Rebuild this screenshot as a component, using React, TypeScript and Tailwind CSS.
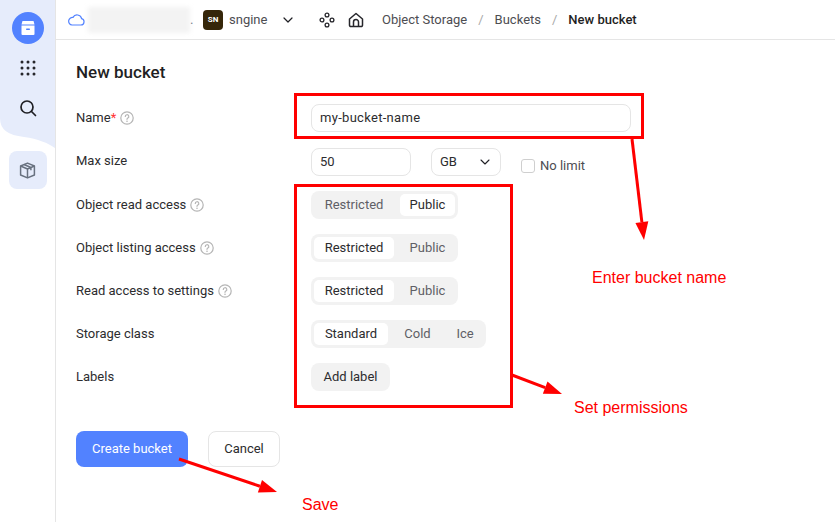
import { ChevronDown } from "lucide-react";
import type { ReactNode } from "react";

const Help = () => (
  <svg width="14" height="14" viewBox="0 0 14 14" fill="none" className="shrink-0">
    <circle cx="7" cy="7" r="6.2" stroke="#b5b5b5" strokeWidth="1.2" />
    <path d="M5.3 5.5a1.75 1.75 0 1 1 2.6 1.5c-.6.35-.9.7-.9 1.3" stroke="#b5b5b5" strokeWidth="1.2" strokeLinecap="round" />
    <circle cx="7" cy="10.2" r=".8" fill="#b5b5b5" />
  </svg>
);

const Row = ({ label, help, required, raised, children }: { label: string; help?: boolean; required?: boolean; raised?: boolean; children: ReactNode }) => (
  <div className="flex h-[43px] items-center">
    <div className={`flex w-[235px] items-center gap-[4px] text-[#2c2c2e] ${raised ? "mt-[-2px]" : ""}`}>
      <span>
        {label}
        {required && <span className="text-[#f33]">*</span>}
      </span>
      {help && <Help />}
    </div>
    {children}
  </div>
);

const Segments = ({ items, active }: { items: { name: string; w: string }[]; active: number }) => (
  <div className="flex h-[28px] items-center gap-[6px] rounded-lg bg-[#f2f2f2] px-[3px]">
    {items.map((item, i) => (
      <div
        key={item.name}
        className={`flex h-[22px] items-center justify-center rounded-[5px] ${item.w} ${
          i === active ? "bg-white text-[#2c2c2e]" : "text-[#5f5f66]"
        }`}
      >
        {item.name}
      </div>
    ))}
  </div>
);

const Arrow = ({ x1, y1, x2, y2 }: { x1: number; y1: number; x2: number; y2: number }) => {
  const a = Math.atan2(y2 - y1, x2 - x1);
  const len = 18;
  const hw = 6.5;
  const bx = x2 - Math.cos(a) * len;
  const by = y2 - Math.sin(a) * len;
  const px = -Math.sin(a) * hw;
  const py = Math.cos(a) * hw;
  return (
    <>
      <line x1={x1} y1={y1} x2={bx} y2={by} stroke="#ff0000" strokeWidth="3" />
      <polygon points={`${x2},${y2} ${bx + px},${by + py} ${bx - px},${by - py}`} fill="#ff0000" />
    </>
  );
};

const Note = ({ className, children }: { className: string; children: ReactNode }) => (
  <div className={`absolute font-['Liberation_Sans',sans-serif] text-[16px] leading-[18px] text-[#ff0000] ${className}`}>{children}</div>
);

const access = [
  { name: "Restricted", w: "w-[80px]" },
  { name: "Public", w: "w-[55px]" },
];

export default function App() {
  return (
    <div className="relative flex h-[522px] w-[835px] overflow-hidden bg-white font-['Roboto',sans-serif] text-[13px] leading-[18px]">
      <aside className="relative flex w-[56px] shrink-0 flex-col items-center border-r border-[#e5e5e5]">
        <svg width="55" height="150" viewBox="0 0 55 150" className="absolute left-0 top-0">
          <path d="M0 0H55V148C48 143 38 139 24 137C8 135 0 130 0 118Z" fill="#e6ecfb" />
        </svg>
        <div className="relative mt-[12px] flex h-[32px] w-[32px] items-center justify-center rounded-full bg-[#5282ff]">
          <svg width="16" height="16" viewBox="0 0 16 16" fill="white">
            <path d="M2.5 1h11l1 3.5h-13z" />
            <path d="M1.5 5.5h13V14a1 1 0 0 1-1 1h-11a1 1 0 0 1-1-1z" />
            <rect x="6" y="8.5" width="4" height="1.4" rx=".7" fill="#5282ff" />
          </svg>
        </div>
        <svg width="16" height="16" viewBox="0 0 16 16" fill="#26262b" className="relative mt-[16px]">
          {[2, 8, 14].flatMap((y) => [2, 8, 14].map((x) => <circle key={`${x}-${y}`} cx={x} cy={y} r="1.5" />))}
        </svg>
        <svg width="18" height="18" viewBox="0 0 18 18" fill="none" stroke="#1f1f24" strokeWidth="1.7" className="relative mt-[23px]">
          <circle cx="8" cy="8" r="6" />
          <path d="M12.5 12.5L16.5 16.5" strokeLinecap="round" />
        </svg>
        <div className="relative mt-[34px] flex h-[38px] w-[38px] items-center justify-center rounded-lg bg-[#e6ecfb]">
          <svg width="17" height="17" viewBox="0 0 16 16" fill="none" stroke="#68717f" strokeWidth="1.4" strokeLinejoin="round">
            <path d="M8 1l6.5 2.8v8.4L8 15l-6.5-2.8V3.8z" />
            <path d="M1.5 3.8L8 6.6l6.5-2.8M8 6.6V15M4.7 2.4l6.5 2.8v2.6" />
          </svg>
        </div>
      </aside>

      <div className="flex min-w-0 flex-1 flex-col">
        <header className="flex h-[40px] shrink-0 items-center border-b border-[#e5e5e5] pl-[12px] text-[#2c2c2e]">
          <svg width="17" height="13" viewBox="0 0 17 13" fill="none" stroke="#5282ff" strokeWidth="1.2">
            <path d="M4 12h9a3.2 3.2 0 0 0 .6-6.3A4.6 4.6 0 0 0 5 4.4 3.8 3.8 0 0 0 4 12z" />
          </svg>
          <div className="ml-[3px] h-[26px] w-[102px] bg-[#f3f3f3] blur-[2px]" />
          <span className="w-[13px] text-[#5f5f66]">.</span>
          <div className="flex h-[20px] w-[20px] items-center justify-center rounded-[4px] bg-[#35260a] text-[8px] font-bold text-white">SN</div>
          <span className="ml-[6px] w-[39px] text-[#4d4d52]">sngine</span>
          <ChevronDown size={16} strokeWidth={1.8} className="ml-[12px] text-[#1f1f24]" />
          <svg width="16" height="16" viewBox="0 0 16 16" fill="none" stroke="#26262b" strokeWidth="1.3" className="ml-[23px]">
            <circle cx="8" cy="3" r="1.9" />
            <circle cx="3" cy="8" r="1.9" />
            <circle cx="13" cy="8" r="1.9" />
            <circle cx="8" cy="13" r="1.9" />
          </svg>
          <svg width="16" height="16" viewBox="0 0 16 16" fill="none" stroke="#26262b" strokeWidth="1.5" className="ml-[13px]" strokeLinejoin="round">
            <path d="M1.5 7L8 1.5 14.5 7v6.2a1.3 1.3 0 0 1-1.3 1.3H2.8a1.3 1.3 0 0 1-1.3-1.3z" />
            <path d="M5.5 14.5V10a2.5 2.5 0 0 1 5 0v4.5" />
          </svg>
          <nav className="ml-[18px] flex items-center text-[#4d4d52]">
            <span>Object Storage</span>
            <span className="mx-[11px] text-[#a8a8a8]">/</span>
            <span>Buckets</span>
            <span className="mx-[11px] text-[#a8a8a8]">/</span>
            <span className="font-medium text-[#1f1f24]">New bucket</span>
          </nav>
        </header>

        <main className="pl-[20px]">
          <h1 className="mt-[21px] text-[17px] font-medium leading-[22px] text-[#1f1f24]">New bucket</h1>
          <div className="mt-[13px] pt-[1px]">
            <Row label="Name" help required raised>
              <div className="mt-[-2px] flex h-[28px] w-[320px] items-center rounded-lg border border-[#e5e5e5] px-[8px] tracking-[0.3px] text-[#2c2c2e]">my-bucket-name</div>
            </Row>
            <Row label="Max size" raised>
              <div className="flex h-[28px] w-[100px] items-center rounded-lg border border-[#e5e5e5] px-[8px] text-[#2c2c2e]">50</div>
              <div className="ml-[20px] flex h-[28px] w-[70px] items-center justify-between rounded-lg border border-[#e5e5e5] pl-[8px] pr-[7px] text-[#2c2c2e]">
                GB
                <ChevronDown size={16} strokeWidth={1.6} className="text-[#1f1f24]" />
              </div>
              <div className="ml-[20px] mt-[8px] flex items-center gap-[5px] text-[#4d4d52]">
                <div className="h-[14px] w-[14px] rounded-[3px] border border-[#cfcfcf]" />
                No limit
              </div>
            </Row>
            <Row label="Object read access" help>
              <Segments active={1} items={access} />
            </Row>
            <Row label="Object listing access" help>
              <Segments active={0} items={access} />
            </Row>
            <Row label="Read access to settings" help>
              <Segments active={0} items={access} />
            </Row>
            <Row label="Storage class">
              <Segments active={0} items={[{ name: "Standard", w: "w-[74px]" }, { name: "Cold", w: "w-[47px]" }, { name: "Ice", w: "w-[36px]" }]} />
            </Row>
            <Row label="Labels">
              <div className="flex h-[28px] w-[79px] items-center justify-center rounded-lg bg-[#f2f2f2] text-[#2c2c2e]">Add label</div>
            </Row>
          </div>
          <div className="mt-[33px] flex gap-[20px]">
            <button className="h-[36px] w-[112px] rounded-lg bg-[#5282ff] text-white">Create bucket</button>
            <button className="h-[36px] w-[72px] rounded-lg border border-[#e5e5e5] text-[#2c2c2e]">Cancel</button>
          </div>
        </main>
      </div>

      {/* red annotations on top of the screenshot */}
      <div className="absolute left-[294px] top-[93px] h-[46px] w-[350px] border-[3px] border-[#ff0000]" />
      <div className="absolute left-[294px] top-[184px] h-[224px] w-[219px] border-[3px] border-[#ff0000]" />
      <svg width="835" height="522" className="pointer-events-none absolute left-0 top-0">
        <Arrow x1={632} y1={139} x2={644} y2={240} />
        <Arrow x1={512} y1={375} x2={562} y2={394} />
        <Arrow x1={179} y1={459} x2={277} y2={492} />
      </svg>
      <Note className="left-[592px] top-[269px]">Enter bucket name</Note>
      <Note className="left-[574px] top-[399px]">Set permissions</Note>
      <Note className="left-[302px] top-[496px]">Save</Note>
    </div>
  );
}
